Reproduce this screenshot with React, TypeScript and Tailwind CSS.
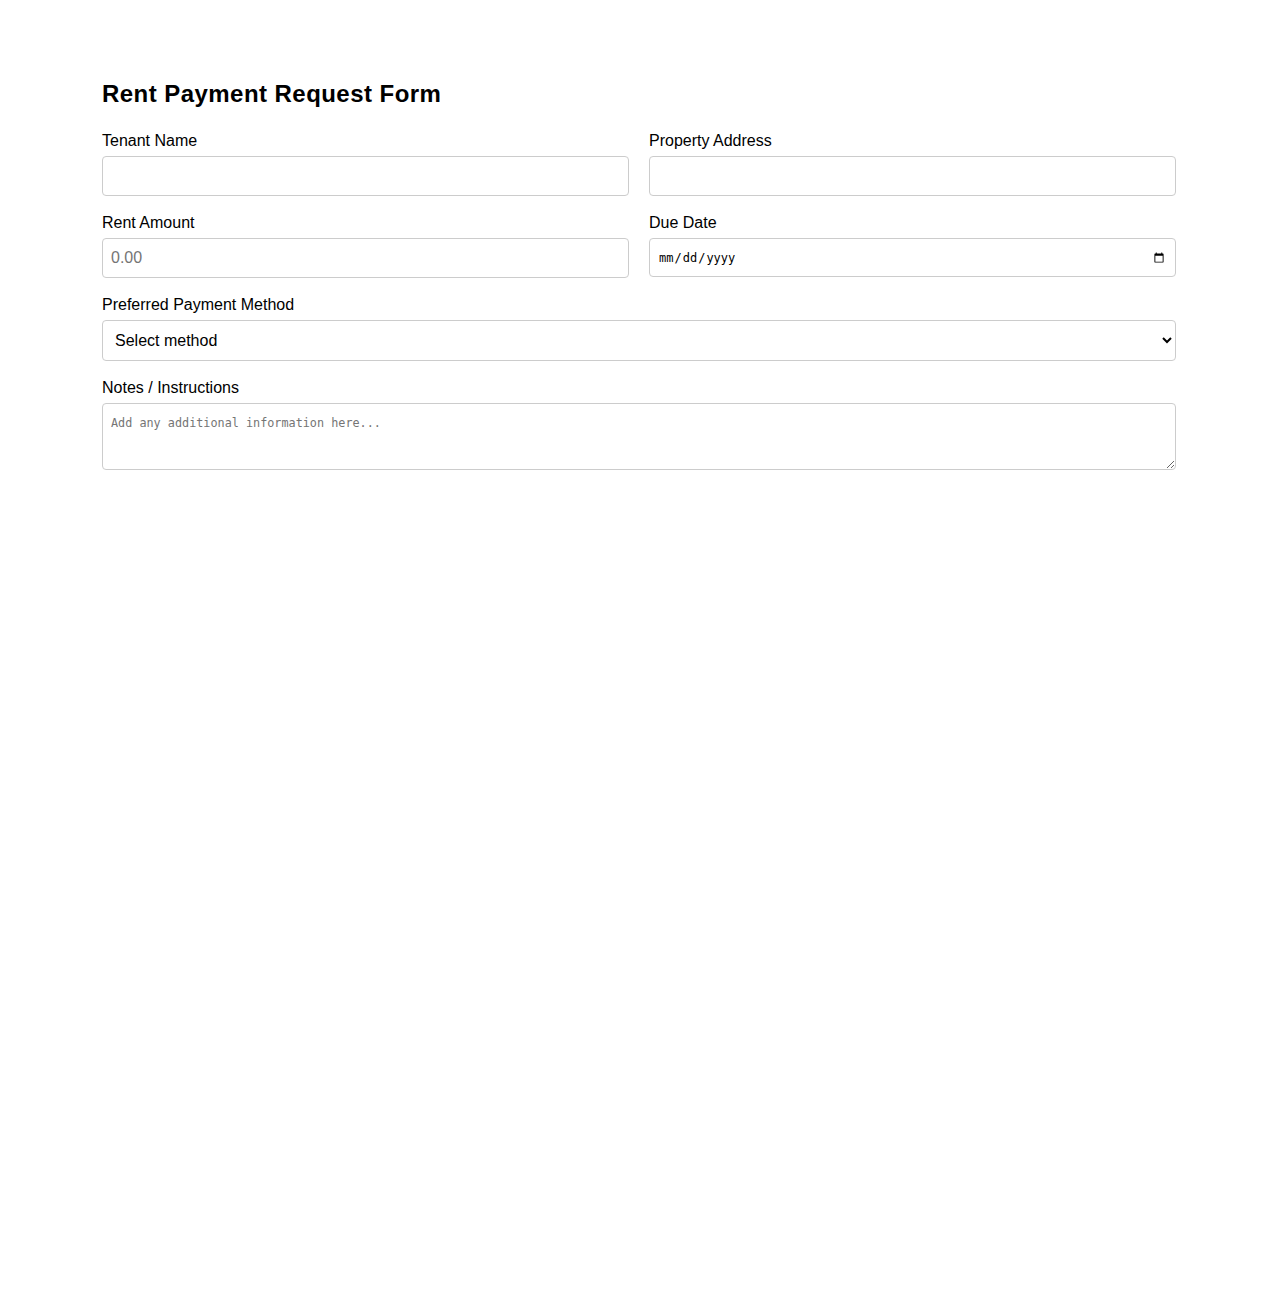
import React, { useState } from 'react';

const labelCls = 'block mb-[6px] text-base text-black leading-[18px]';
const inputCls =
  'w-full h-10 px-2 border border-[#cccccc] rounded-[4px] bg-white text-base text-black placeholder:text-[#757575] outline-none';

const App: React.FC = () => {
  const [form, setForm] = useState({
    tenant: '',
    address: '',
    amount: '',
    dueDate: '',
    method: '',
    notes: '',
  });

  const update = (key: keyof typeof form) => (
    e: React.ChangeEvent<HTMLInputElement | HTMLSelectElement | HTMLTextAreaElement>
  ) => setForm({ ...form, [key]: e.target.value });

  return (
    <div className="min-h-screen bg-white font-['Liberation_Sans',Arial,sans-serif]">
      <form className="max-w-[1074px] mx-auto pt-[80px]">
        <h2 className="text-2xl font-bold text-black leading-7 mb-[24px] tracking-[0.45px]">
          Rent Payment Request Form
        </h2>

        <div className="grid grid-cols-2 gap-x-5">
          <div className="mb-[18px]">
            <label className={labelCls}>Tenant Name</label>
            <input type="text" value={form.tenant} onChange={update('tenant')} className={inputCls} />
          </div>
          <div className="mb-[18px]">
            <label className={labelCls}>Property Address</label>
            <input type="text" value={form.address} onChange={update('address')} className={inputCls} />
          </div>
          <div className="mb-[18px]">
            <label className={labelCls}>Rent Amount</label>
            <input
              type="number"
              placeholder="0.00"
              value={form.amount}
              onChange={update('amount')}
              className={inputCls}
            />
          </div>
          <div className="mb-[18px]">
            <label className={labelCls}>Due Date</label>
            <input
              type="date"
              value={form.dueDate}
              onChange={update('dueDate')}
              className="w-full h-[39px] px-2 border border-[#cccccc] rounded-[4px] bg-white text-[12px] text-black font-['DejaVu_Sans_Mono',monospace] outline-none"
            />
          </div>
        </div>

        <div className="mb-[18px]">
          <label className={labelCls}>Preferred Payment Method</label>
          <select
            value={form.method}
            onChange={update('method')}
            className="w-full h-[41px] px-2 border border-[#cccccc] rounded-[4px] bg-white text-base text-black outline-none"
          >
            <option value="">Select method</option>
            <option value="bank">Bank Transfer</option>
            <option value="card">Credit Card</option>
            <option value="check">Check</option>
            <option value="cash">Cash</option>
          </select>
        </div>

        <div>
          <label className={labelCls}>Notes / Instructions</label>
          <textarea
            placeholder="Add any additional information here..."
            value={form.notes}
            onChange={update('notes')}
            className="block w-full h-[67px] px-2 pt-3 pb-2 border border-[#cccccc] rounded-[4px] bg-white text-[11.8px] leading-[14px] text-black font-['DejaVu_Sans_Mono',monospace] placeholder:text-[#757575] outline-none"
          />
        </div>
      </form>
    </div>
  );
};

export default App;
